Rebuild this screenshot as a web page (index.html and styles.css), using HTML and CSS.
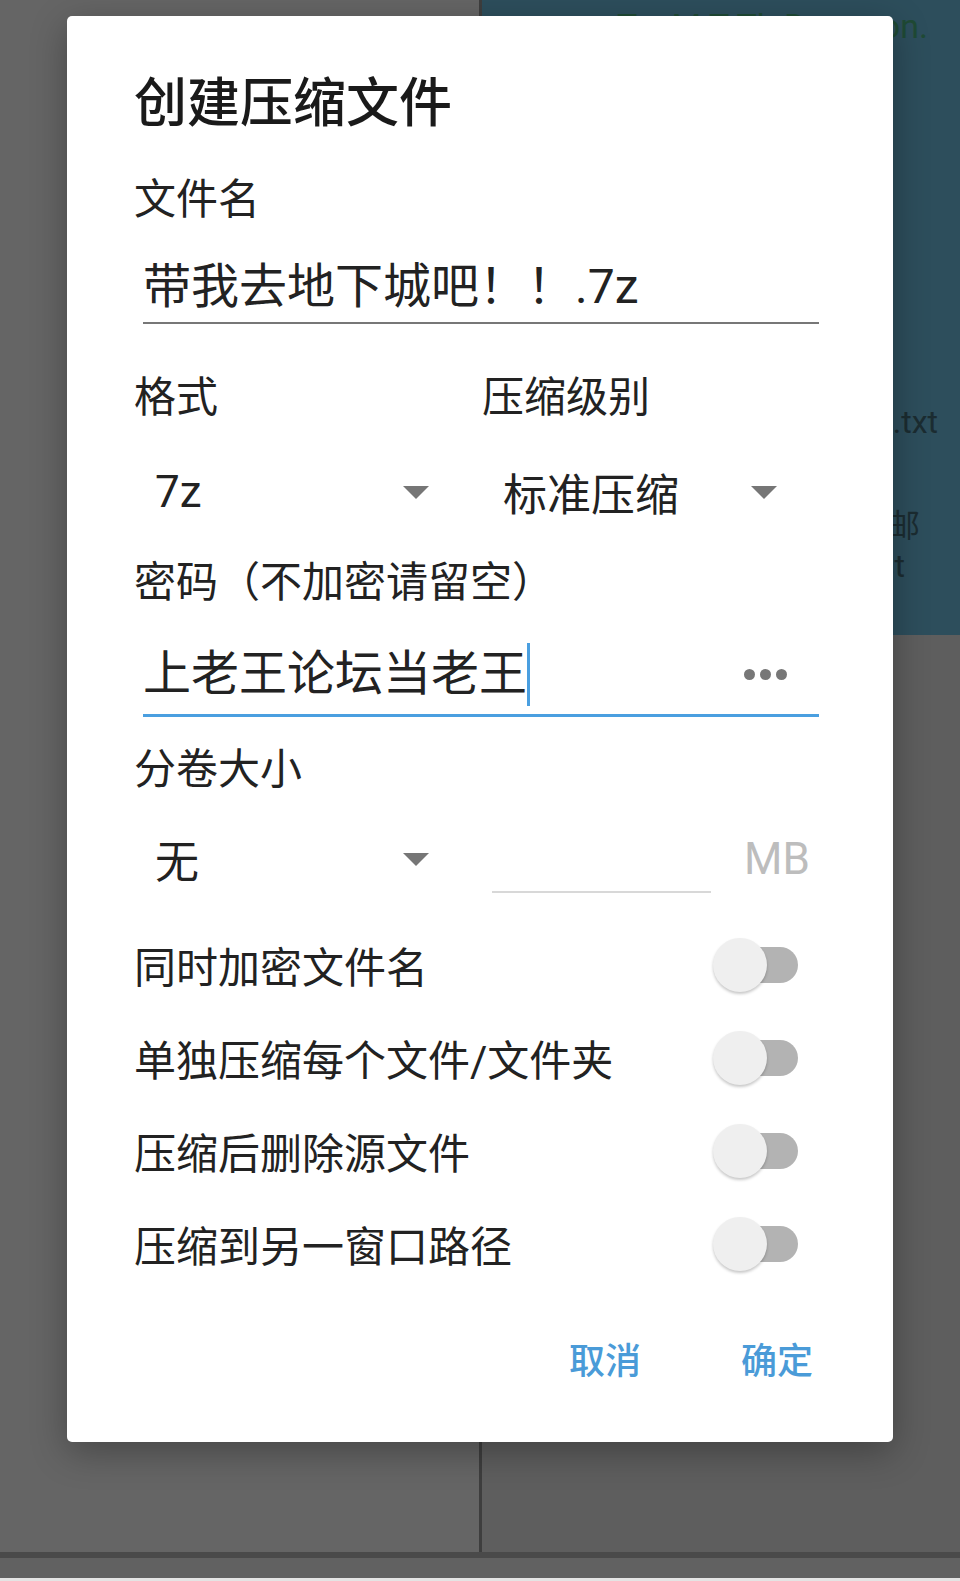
FILE: index.html
```html
<!DOCTYPE html>
<html lang="zh-CN">
<head>
    <meta charset="UTF-8">
    <meta name="viewport" content="width=device-width, initial-scale=1.0">
    <title>创建压缩文件</title>
    <link rel="stylesheet" href="styles.css">
</head>
<body>
    <!-- Dimmed file manager behind the dialog -->
    <div class="screen">
        <div class="panes">
            <div class="pane-left"></div>
            <div class="pane-right">
                <div class="teal">
                    <div class="bg-line bg-top">To: M T Th Dungeon.</div>
                    <div class="bg-line bg-txt">新建文本文档.txt</div>
                    <div class="bg-line bg-mail">文件夹邮</div>
                    <div class="bg-line bg-t">list</div>
                </div>
            </div>
        </div>
        <div class="navbar"></div>
    </div>

    <!-- Create archive dialog -->
    <div class="dialog">
        <h1 class="title">创建压缩文件</h1>

        <div class="label label-first">文件名</div>
        <div class="text-input">带我去地下城吧！！.7z</div>

        <div class="format-row">
            <div class="column">
                <div class="label">格式</div>
                <div class="select">
                    <span>7z</span>
                    <span class="arrow"></span>
                </div>
            </div>
            <div class="column">
                <div class="label">压缩级别</div>
                <div class="select">
                    <span>标准压缩</span>
                    <span class="arrow"></span>
                </div>
            </div>
        </div>

        <div class="label label-password">密码（不加密请留空）</div>
        <div class="password-input">
            <span>上老王论坛当老王</span>
            <span class="caret"></span>
            <span class="dots"><i></i><i></i><i></i></span>
        </div>

        <div class="label label-volume">分卷大小</div>
        <div class="volume-row">
            <div class="select">
                <span>无</span>
                <span class="arrow"></span>
            </div>
            <div class="size-input"></div>
            <div class="unit">MB</div>
        </div>

        <div class="switches">
            <div class="switch-row">
                <span>同时加密文件名</span>
                <span class="switch"><span class="track"></span><span class="thumb"></span></span>
            </div>
            <div class="switch-row">
                <span>单独压缩每个文件/文件夹</span>
                <span class="switch"><span class="track"></span><span class="thumb"></span></span>
            </div>
            <div class="switch-row">
                <span>压缩后删除源文件</span>
                <span class="switch"><span class="track"></span><span class="thumb"></span></span>
            </div>
            <div class="switch-row">
                <span>压缩到另一窗口路径</span>
                <span class="switch"><span class="track"></span><span class="thumb"></span></span>
            </div>
        </div>

        <div class="buttons">
            <span class="button">取消</span>
            <span class="button">确定</span>
        </div>
    </div>
</body>
</html>
```

FILE: styles.css
```css
/* Global Styles */
body {
    margin: 0;
    font-family: Roboto, "Noto Sans CJK SC", sans-serif;
    color: #222222;
}

/* Background screen */
.screen {
    height: 1581px;
    display: flex;
    flex-direction: column;
    background-color: #606060;
}

.panes {
    flex: 1;
    display: flex;
}

.pane-left {
    width: 479px;
    background-color: #656565;
}

.pane-right {
    flex: 1;
    border-left: 3px solid #3e3e3e;
    background-color: #5e5e5e;
}

.teal {
    height: 635px;
    background-color: #2d4e5c;
    overflow: hidden;
}

.bg-line {
    text-align: right;
    font-size: 32px;
    line-height: 40px;
    color: #1b2c31;
    white-space: nowrap;
}

.bg-top {
    margin-top: 6px;
    padding-right: 32px;
    font-size: 34px;
    color: #1f4a35;
}

.bg-txt {
    margin-top: 356px;
    padding-right: 22px;
}

.bg-mail {
    margin-top: 64px;
    padding-right: 40px;
}

.bg-t {
    padding-right: 55px;
}

.navbar {
    height: 20px;
    border-top: 6px solid #4a4a4a;
    border-bottom: 3px solid #e4e4e4;
    background-color: #616161;
}

/* Dialog */
.dialog {
    position: absolute;
    left: 67px;
    top: 16px;
    width: 826px;
    height: 1426px;
    box-sizing: border-box;
    padding: 58px 74px 0 67px;
    background-color: #ffffff;
    border-radius: 5px;
    box-shadow: 0 10px 36px rgba(0, 0, 0, 0.3);
}

.title {
    margin: 0;
    font-size: 53px;
    line-height: 60px;
    font-weight: 500;
    color: #1a1a1a;
}

.label {
    font-size: 42px;
    line-height: 50px;
}

.label-first {
    margin-top: 41px;
}

.text-input {
    margin: 32px 0 0 9px;
    height: 60px;
    padding-bottom: 5px;
    border-bottom: 2px solid #777777;
    font-size: 48px;
    line-height: 60px;
    white-space: nowrap;
}

/* Format and level */
.format-row {
    margin-top: 49px;
    display: grid;
    grid-template-columns: 348px 1fr;
}

.select {
    margin-top: 39px;
    width: 295px;
    height: 60px;
    box-sizing: border-box;
    padding-left: 21px;
    display: flex;
    align-items: center;
    justify-content: space-between;
    font-size: 44px;
}

.arrow {
    width: 0;
    height: 0;
    border-left: 13px solid transparent;
    border-right: 13px solid transparent;
    border-top: 13px solid #767676;
}

/* Password */
.label-password {
    margin-top: 36px;
}

.password-input {
    margin: 36px 0 0 9px;
    height: 60px;
    padding-bottom: 10px;
    border-bottom: 3px solid #4a9fe0;
    display: flex;
    align-items: center;
    font-size: 48px;
    line-height: 60px;
}

.caret {
    width: 3px;
    height: 63px;
    background-color: #4a9fe0;
}

.dots {
    margin-left: auto;
    margin-right: 32px;
    display: flex;
    gap: 5px;
}

.dots i {
    width: 11px;
    height: 11px;
    border-radius: 50%;
    background-color: #777777;
}

/* Volume size */
.label-volume {
    margin-top: 28px;
}

.volume-row {
    margin-top: 34px;
    display: flex;
    align-items: flex-start;
}

.volume-row .select {
    margin-top: 0;
}

.size-input {
    margin-left: 63px;
    width: 219px;
    height: 62px;
    border-bottom: 2px solid #d8d8d8;
}

.unit {
    margin-left: 33px;
    font-size: 44px;
    line-height: 60px;
    color: #bdbdbd;
}

/* Switches */
.switches {
    margin-top: 25px;
}

.switch-row {
    height: 93px;
    display: flex;
    align-items: center;
    justify-content: space-between;
    font-size: 42px;
}

.switch {
    position: relative;
    width: 85px;
    height: 54px;
    margin-right: 21px;
}

.switch .track {
    position: absolute;
    right: 0;
    top: 9px;
    width: 68px;
    height: 36px;
    border-radius: 18px;
    background-color: #b3b3b3;
}

.switch .thumb {
    position: absolute;
    left: 0;
    top: 0;
    width: 54px;
    height: 54px;
    border-radius: 50%;
    background-color: #efefef;
    box-shadow: 0 2px 3px rgba(0, 0, 0, 0.22);
}

/* Buttons */
.buttons {
    margin-top: 47px;
    padding-right: 6px;
    display: flex;
    justify-content: flex-end;
    gap: 100px;
}

.button {
    font-size: 36px;
    line-height: 50px;
    font-weight: 500;
    color: #4a9bd8;
}
```
